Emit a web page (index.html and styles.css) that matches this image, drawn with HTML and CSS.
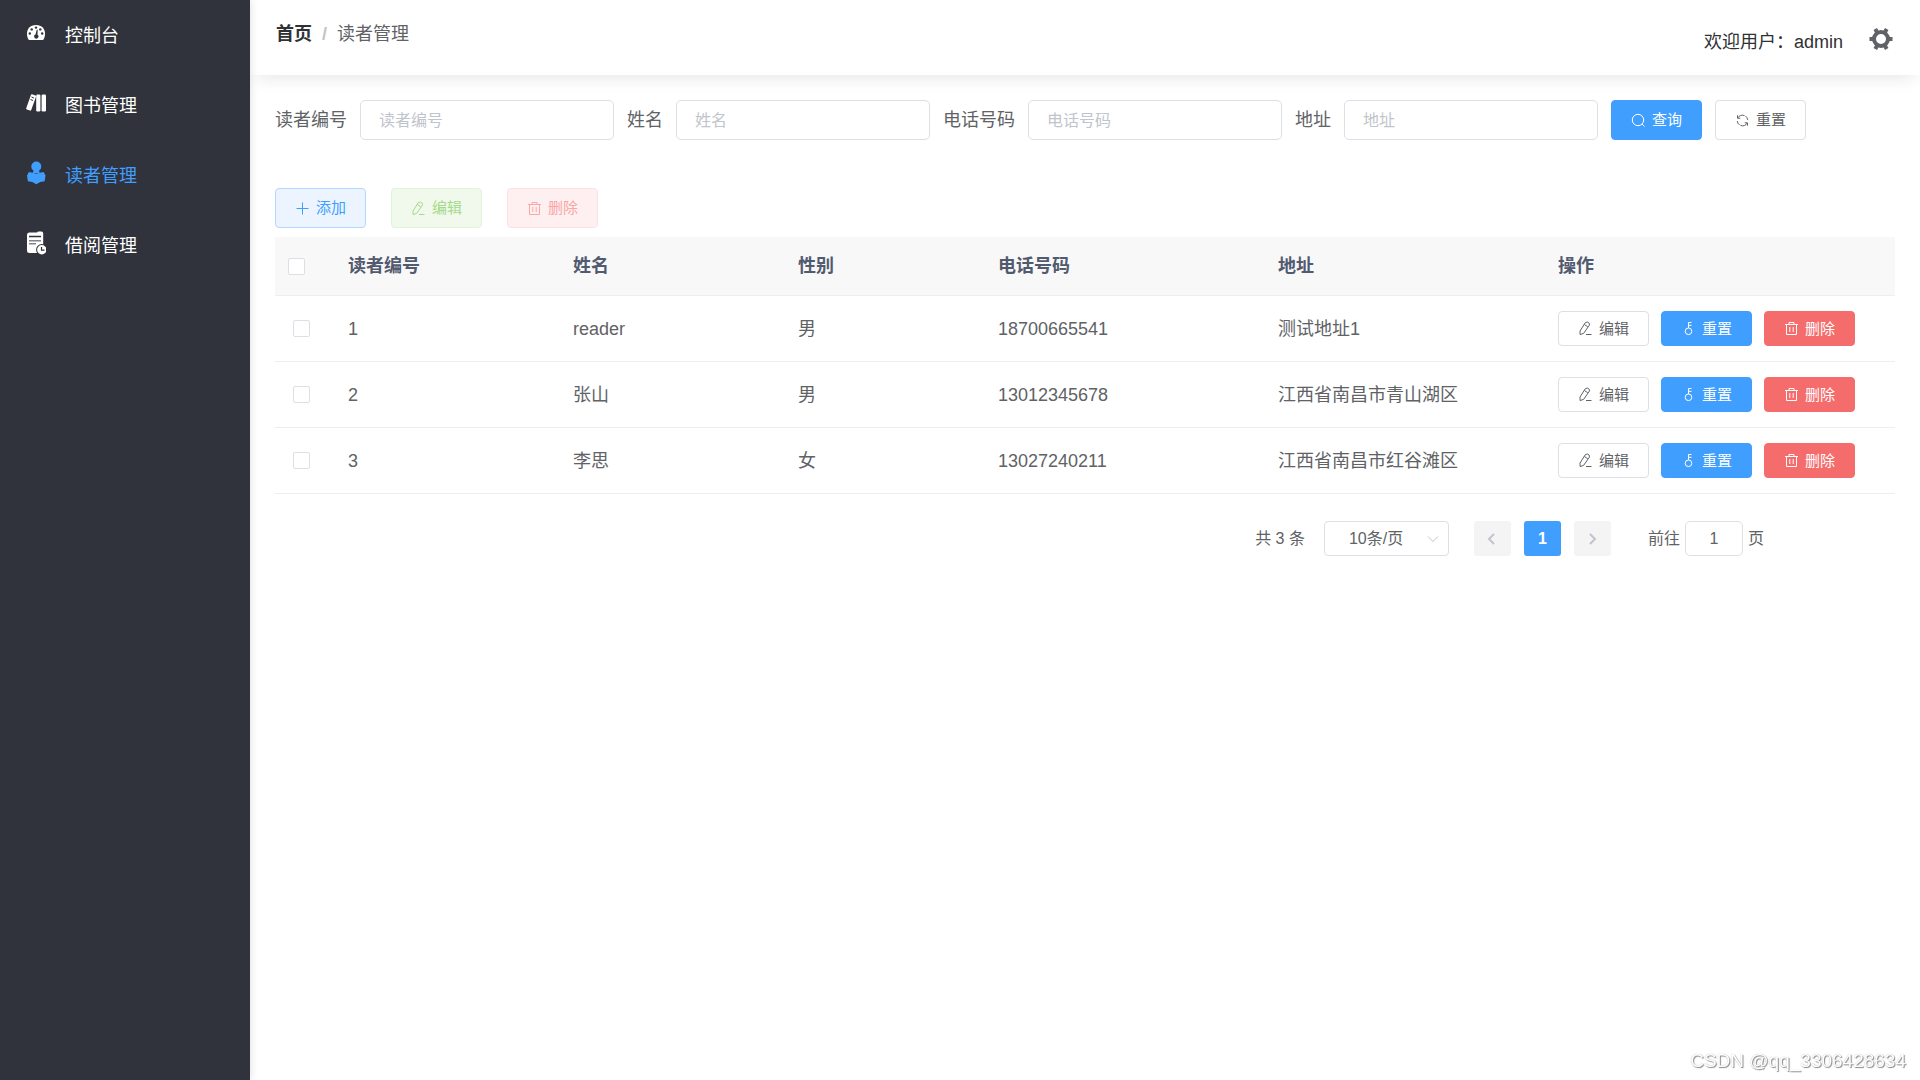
FILE: index.html
```html
<!DOCTYPE html>
<html lang="zh-CN">
<head>
<meta charset="utf-8">
<meta name="viewport" content="width=device-width, initial-scale=1">
<title>读者管理</title>
<link rel="stylesheet" href="styles.css">
</head>
<body>
<svg class="sprite" aria-hidden="true">
  <symbol id="i-plus" viewBox="0 0 15 15"><path d="M7.500 1.500v12M1.500 7.500h12"/></symbol>
  <symbol id="i-edit" viewBox="0 0 15 15"><path d="M7.300 1.700 9.300 1l1.900 1.200.3 1.700-5.800 8.400L2.100 13.600 2 10zM6.400 3.500l3.300 2.200M8 13.500h5.500"/></symbol>
  <symbol id="i-delete" viewBox="0 0 15 15"><path d="M1 3.500h13M5 3.500v-2h5v2M2.500 3.500v10h10v-10M5.800 6v5M9.200 6v5"/></symbol>
  <symbol id="i-search" viewBox="0 0 15 15"><circle cx="7" cy="7" r="5.700"/><path d="m11 11 2.500 2.500"/></symbol>
  <symbol id="i-refresh" viewBox="0 0 15 15"><path d="M2.500 5.200V2.300M2.500 5.200h2.800M2.700 5A5.300 5.300 0 0 1 9.500 2.600M10.500 3.100a5.300 5.300 0 0 1 2.200 3.800M12.500 9.800v2.900M12.500 9.800H9.700M12.300 10a5.300 5.300 0 0 1-6.800 2.400M4.500 11.900a5.300 5.300 0 0 1-2.200-3.800"/></symbol>
  <symbol id="i-key" viewBox="0 0 15 15"><circle cx="7.500" cy="10.300" r="3.300"/><path d="M7.500 7V1.500h3M7.500 4.300h3"/></symbol>
</svg>
<div class="app">
  <aside class="sidebar">
    <nav class="menu">
      <a class="menu-item" href="#">
        <svg class="menu-icon" viewBox="0 0 20 24"><path fill="currentColor" d="M2.500 18.500C-1 12 1.500 4 10 4s11 8 7.500 14.500q-.5.500-1.500.5H4q-1 0-1.500-.5z"/><g fill="#30333c"><circle cx="3.800" cy="12.500" r="1.200"/><circle cx="5.700" cy="8.400" r="1.200"/><circle cx="10" cy="6.600" r="1.200"/><circle cx="14.300" cy="8.400" r="1.200"/><circle cx="16.200" cy="12.500" r="1.200"/><path d="M10.700 8.800h1l-.2 5a2.100 2.100 0 1 1-2-.2z"/></g></svg>
        <span>控制台</span>
      </a>
      <a class="menu-item" href="#">
        <svg class="menu-icon" viewBox="0 0 20 24"><g fill="currentColor"><path d="M6 3.200 9.500 4.500q.8.400.5 1.200L5.300 18.800q-.4 1.100-1.300.8L.8 18.400q-.9-.4-.5-1.300L4.900 3.900q.3-.9 1.100-.7z"/><rect x="10.200" y="3.500" width="4.200" height="17" rx="1.200"/><rect x="15.600" y="3.500" width="4.400" height="17" rx="1.200"/></g><path d="m5.500 6 2.500 1M4.500 8.500l2.500 1" stroke="#30333c" stroke-width="1"/></svg>
        <span>图书管理</span>
      </a>
      <a class="menu-item active" href="#">
        <svg class="menu-icon" viewBox="0 0 20 24"><g fill="currentColor"><circle cx="10.300" cy="5.500" r="5"/><path d="M7.500 9h5.500l.5 3h-6.500zM2.500 11.300Q7 11 10.300 12.800 13.500 11 18 11.300q.5 2 1.500 3l-.8 6Q14 20.500 10.300 23.200 6.500 20.500 1.900 20.300L1 14.300q1.200-1 1.500-3z"/></g></svg>
        <span>读者管理</span>
      </a>
      <a class="menu-item" href="#">
        <svg class="menu-icon" viewBox="0 0 20 24"><path fill="currentColor" d="M3.500 1.500H11L12 .5h3.500q1.700.2 1.700 2V22H3.500Q1 22 1 19.500V4q0-2.500 2.500-2.500z"/><path d="M3 5.500h12" stroke="#30333c" stroke-width="1.500"/><path d="M3 9.700h12M3 12.800h7" stroke="#30333c" stroke-opacity=".6" stroke-width="1.400"/><circle cx="15.800" cy="18.800" r="5.700" fill="#30333c"/><circle cx="15.800" cy="18.800" r="4.700" fill="currentColor"/><path d="M15.500 16v3.200h3" fill="none" stroke="#30333c" stroke-width="1.200"/></svg>
        <span>借阅管理</span>
      </a>
    </nav>
  </aside>
  <div class="page">
    <header class="header">
      <nav class="breadcrumb"><a class="crumb-home" href="#">首页</a><span class="slash">/</span><span>读者管理</span></nav>
      <div class="user">
        <span>欢迎用户：admin</span>
        <button class="gear" type="button" aria-label="设置"><svg viewBox="0 0 24 24"><g fill="currentColor"><path fill-rule="evenodd" d="M12 3a9 9 0 1 0 0 18 9 9 0 0 0 0-18zm0 4a5 5 0 1 1 0 10 5 5 0 0 1 0-10z"/><path id="tooth" d="M.5 10h4v4h-4zM19.500 10h4v4h-4z"/><use href="#tooth" transform="rotate(60 12 12)"/><use href="#tooth" transform="rotate(120 12 12)"/></g></svg></button>
      </div>
    </header>
    <main class="content">
      <form class="search">
        <div class="field"><label for="f-id">读者编号</label><input class="text-input" id="f-id" type="text" placeholder="读者编号"></div>
        <div class="field"><label for="f-name">姓名</label><input class="text-input" id="f-name" type="text" placeholder="姓名"></div>
        <div class="field"><label for="f-phone">电话号码</label><input class="text-input" id="f-phone" type="text" placeholder="电话号码"></div>
        <div class="field"><label for="f-addr">地址</label><input class="text-input" id="f-addr" type="text" placeholder="地址"></div>
        <button class="btn primary" type="button"><svg class="icon"><use href="#i-search"/></svg>查询</button>
        <button class="btn" type="button"><svg class="icon"><use href="#i-refresh"/></svg>重置</button>
      </form>
      <div class="toolbar">
        <button class="btn primary-plain" type="button"><svg class="icon"><use href="#i-plus"/></svg>添加</button>
        <button class="btn success-plain" type="button" disabled><svg class="icon"><use href="#i-edit"/></svg>编辑</button>
        <button class="btn danger-plain" type="button" disabled><svg class="icon"><use href="#i-delete"/></svg>删除</button>
      </div>
      <table class="table">
        <colgroup><col class="c-check"><col class="c-id"><col class="c-id"><col class="c-sex"><col class="c-wide"><col class="c-wide"><col class="c-ops"></colgroup>
        <thead>
          <tr><th><input class="check" type="checkbox" aria-label="全选"></th><th>读者编号</th><th>姓名</th><th>性别</th><th>电话号码</th><th>地址</th><th>操作</th></tr>
        </thead>
        <tbody>
          <tr><td class="select-cell"><input class="check" type="checkbox" aria-label="选择 1"></td><td>1</td><td>reader</td><td>男</td><td>18700665541</td><td>测试地址1</td>
            <td><div class="ops"><button class="btn small" type="button"><svg class="icon"><use href="#i-edit"/></svg>编辑</button><button class="btn small primary" type="button"><svg class="icon"><use href="#i-key"/></svg>重置</button><button class="btn small danger" type="button"><svg class="icon"><use href="#i-delete"/></svg>删除</button></div></td></tr>
          <tr><td class="select-cell"><input class="check" type="checkbox" aria-label="选择 2"></td><td>2</td><td>张山</td><td>男</td><td>13012345678</td><td>江西省南昌市青山湖区</td>
            <td><div class="ops"><button class="btn small" type="button"><svg class="icon"><use href="#i-edit"/></svg>编辑</button><button class="btn small primary" type="button"><svg class="icon"><use href="#i-key"/></svg>重置</button><button class="btn small danger" type="button"><svg class="icon"><use href="#i-delete"/></svg>删除</button></div></td></tr>
          <tr><td class="select-cell"><input class="check" type="checkbox" aria-label="选择 3"></td><td>3</td><td>李思</td><td>女</td><td>13027240211</td><td>江西省南昌市红谷滩区</td>
            <td><div class="ops"><button class="btn small" type="button"><svg class="icon"><use href="#i-edit"/></svg>编辑</button><button class="btn small primary" type="button"><svg class="icon"><use href="#i-key"/></svg>重置</button><button class="btn small danger" type="button"><svg class="icon"><use href="#i-delete"/></svg>删除</button></div></td></tr>
        </tbody>
      </table>
      <div class="pagination">
        <span class="total">共 3 条</span>
        <select class="page-size" aria-label="每页条数"><option>10条/页</option><option>20条/页</option></select>
        <div class="pager">
          <button class="page-btn" type="button" disabled aria-label="上一页"><svg viewBox="0 0 16 16"><path d="m10 3-5 5 5 5"/></svg></button>
          <button class="page-btn current" type="button">1</button>
          <button class="page-btn" type="button" disabled aria-label="下一页"><svg viewBox="0 0 16 16"><path d="m6 3 5 5-5 5"/></svg></button>
        </div>
        <div class="jump"><label for="jump">前往</label><input class="jump-input" id="jump" type="text" value="1"><span>页</span></div>
      </div>
    </main>
  </div>
</div>
<div class="watermark">CSDN @qq_3306428634</div>
</body>
</html>
```
FILE: styles.css
```css
* { box-sizing: border-box; }
body {
  margin: 0;
  background: #fff;
  color: #606266;
  font: 18px/24px "Liberation Sans", "Noto Sans CJK SC", sans-serif;
}
button, input, select { margin: 0; font-family: inherit; color: inherit; }
a { color: inherit; text-decoration: none; }
.sprite { display: none; }

.app { display: flex; min-height: 100vh; }
.sidebar {
  position: relative;
  z-index: 2;
  flex: none;
  width: 250px;
  background: #30333c;
  box-shadow: 0 0 8px rgba(0, 0, 0, .15);
}
.menu-item {
  display: flex;
  align-items: center;
  gap: 19px;
  height: 70px;
  padding: 2px 0 0 26px;
  color: #fff;
}
.menu-item.active { color: #409eff; }
.menu-icon { width: 20px; height: 24px; margin-bottom: 6px; }

.page { flex: 1; min-width: 0; }
.header {
  display: flex;
  justify-content: space-between;
  align-items: flex-start;
  height: 75px;
  padding: 22px 27px 0 26px;
  box-shadow: 0 10px 16px -6px rgba(0, 0, 0, .09);
}
.breadcrumb { display: flex; }
.crumb-home { font-weight: 700; color: #303133; }
.slash { margin: 0 10px; font-weight: 700; color: #c0c4cc; }
.user { display: flex; align-items: center; gap: 26px; padding-top: 5px; color: #303133; }
.gear { width: 24px; height: 24px; margin-bottom: 6px; padding: 0; border: 0; background: none; color: #606266; }
.gear svg { display: block; }

.content { padding: 25px; }
.search { display: flex; flex-wrap: wrap; align-items: center; gap: 13px; }
.field { display: flex; align-items: center; gap: 13px; }
.text-input {
  width: 254px;
  height: 40px;
  padding: 1px 18px 0;
  border: 1px solid #dcdfe6;
  border-radius: 5px;
  background: #fff;
  font-size: 16px;
}
.text-input::placeholder { color: #c0c4cc; }

.btn {
  display: inline-flex;
  align-items: center;
  gap: 6px;
  height: 40px;
  padding: 0 19px;
  border: 1px solid #dcdfe6;
  border-radius: 4px;
  background: #fff;
  color: #606266;
  font-size: 15px;
  line-height: 20px;
}
.small { height: 35px; }
.icon { width: 15px; height: 15px; fill: none; stroke: currentColor; stroke-width: 1px; }
.primary { background: #409eff; border-color: #409eff; color: #fff; }
.danger { background: #f56c6c; border-color: #f56c6c; color: #fff; }
.primary-plain { background: #ecf5ff; border-color: #b3d8ff; color: #409eff; }
.success-plain { background: #f0f9eb; border-color: #e1f3d8; color: #a4da89; }
.danger-plain { background: #fef0f0; border-color: #fde2e2; color: #f9a7a7; }

.toolbar { display: flex; gap: 25px; margin: 48px 0 9px; }

.table { width: 100%; table-layout: fixed; border-collapse: separate; border-spacing: 0; }
.c-check { width: 60px; }
.c-id { width: 225px; }
.c-sex { width: 200px; }
.c-wide { width: 280px; }
.c-ops { width: 350px; }
.table th, .table td { padding: 0 0 0 13px; border-bottom: 1px solid #ebeef5; text-align: left; }
.table th { height: 59px; background: #f8f8f9; color: #515a6e; font-weight: 700; }
.table td { height: 66px; }
.table .select-cell { padding-left: 18px; }
.check {
  display: block;
  appearance: none;
  width: 17px;
  height: 17px;
  border: 1px solid #dcdfe6;
  border-radius: 2px;
  background: #fff;
}
.ops { display: flex; gap: 12px; }

.pagination {
  display: flex;
  align-items: center;
  justify-content: flex-end;
  padding: 27px 131px 0 0;
  font-size: 16px;
}
.page-size {
  appearance: none;
  width: 125px;
  height: 35px;
  margin: 0 25px 0 19px;
  padding: 0 24px;
  border: 1px solid #dcdfe6;
  border-radius: 4px;
  background: #fff url("data:image/svg+xml,%3Csvg xmlns='http://www.w3.org/2000/svg' viewBox='0 0 12 12'%3E%3Cpath d='m1 3.500 5 5 5-5' fill='none' stroke='%23c0c4cc'/%3E%3C/svg%3E") no-repeat right 9px center / 12px;
  font-size: 16px;
}
.pager { display: flex; gap: 13px; margin-right: 37px; }
.page-btn {
  display: flex;
  align-items: center;
  justify-content: center;
  width: 37px;
  height: 35px;
  padding: 0;
  border: 0;
  border-radius: 3px;
  background: #f4f4f5;
  color: #c0c4cc;
  font-size: 16px;
  font-weight: 700;
}
.page-btn svg { width: 16px; fill: none; stroke: currentColor; stroke-width: 2px; }
.page-btn.current { background: #409eff; color: #fff; }
.jump { display: flex; align-items: center; gap: 5px; }
.jump-input {
  width: 58px;
  height: 35px;
  padding: 0;
  border: 1px solid #dcdfe6;
  border-radius: 5px;
  text-align: center;
  font-size: 16px;
}

.watermark {
  position: fixed;
  right: 14px;
  bottom: 7px;
  color: #fff;
  font-size: 19px;
  text-shadow: 1px 1px 1px #888, 0 0 1px #aaa;
}
```
